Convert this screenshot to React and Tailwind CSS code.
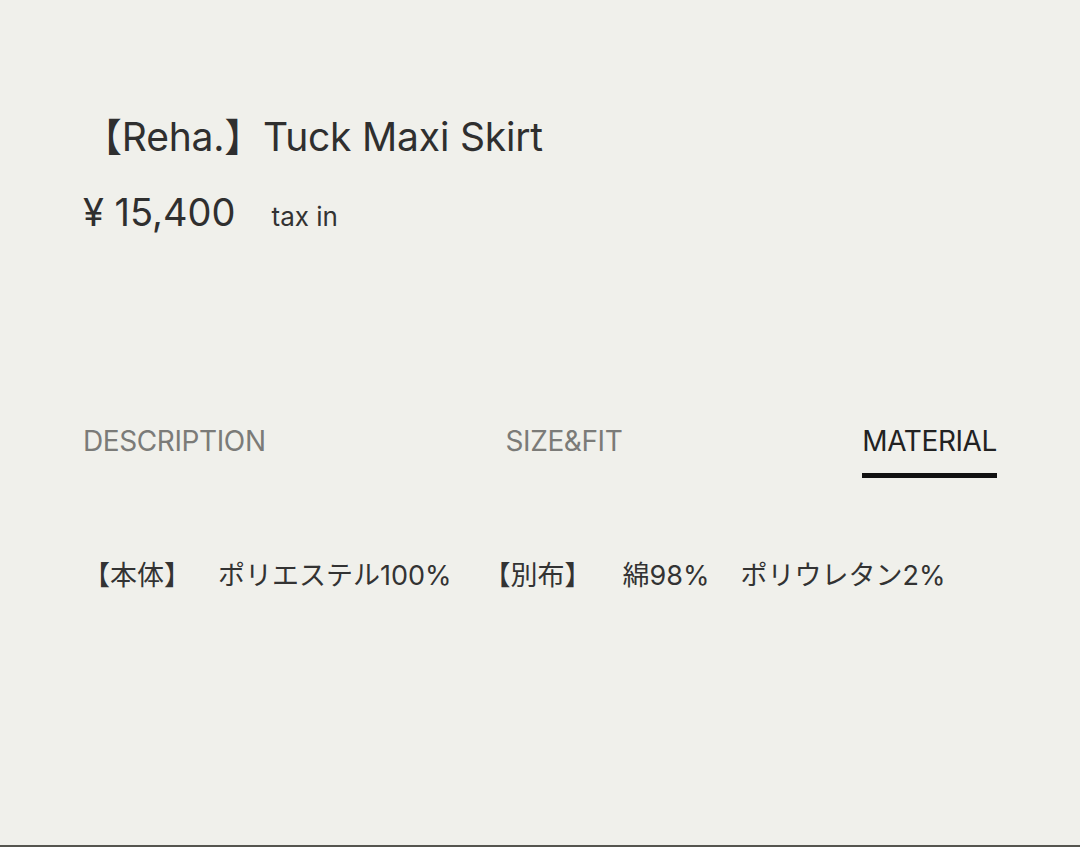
export default function App() {
  const jp = { fontFamily: '"Inter", "Noto Sans CJK JP", sans-serif' };
  return (
    <div className="w-[1080px] h-[847px] bg-[#f0f0eb] flex flex-col text-[#333333] border-b-2 border-[#55554f]" style={jp}>
      <div className="pl-[83px] pt-[112px]">
        <h1 className="text-[39px] leading-[50px] font-normal text-[#2f2f2f] tracking-[-0.2px]">【Reha.】Tuck Maxi Skirt</h1>
        <div className="flex items-baseline mt-[28px]">
          <span className="text-[38px] leading-[44px] text-[#2f2f2f]">¥ 15,400</span>
          <span className="text-[26px] ml-[36px] text-[#333]">tax in</span>
        </div>
      </div>
      <div className="flex justify-between items-start pl-[83px] pr-[83px] mt-[187px]">
        <div className="text-[28px] leading-[36px] text-[#7b7b78] tracking-[-0.4px]">DESCRIPTION</div>
        <div className="text-[28px] leading-[36px] text-[#7b7b78] tracking-[-0.4px]">SIZE&amp;FIT</div>
        <div className="flex flex-col">
          <div className="text-[28px] leading-[36px] text-[#222] tracking-[-0.4px]">MATERIAL</div>
          <div className="h-[5px] bg-[#111] mt-[14px]" />
        </div>
      </div>
      <div className="pl-[83px] mt-[81px] text-[27px] leading-[34px] text-[#333] flex">
        <span>【本体】</span>
        <span className="ml-[27px]">ポリエステル100%</span>
        <span className="ml-[32px]">【別布】</span>
        <span className="ml-[31px]">綿98%</span>
        <span className="ml-[31px]">ポリウレタン2%</span>
      </div>
    </div>
  );
}
